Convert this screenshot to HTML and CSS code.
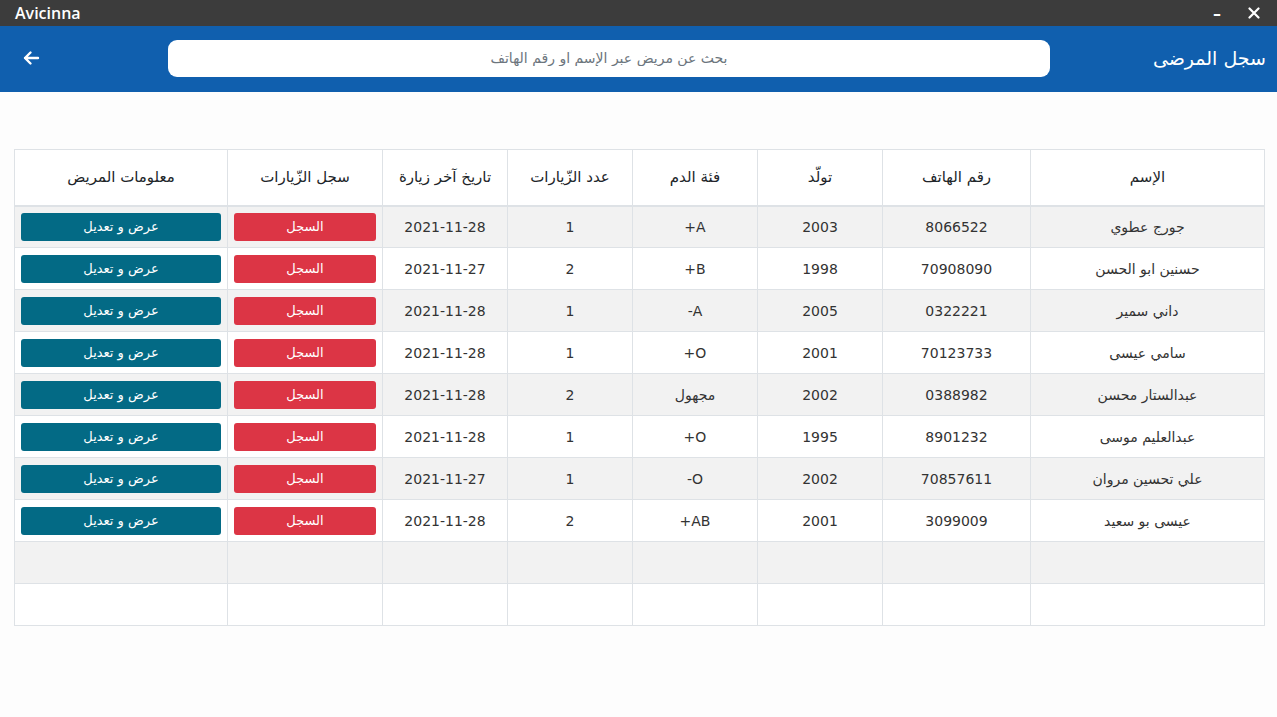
FILE: index.html
```html
<!DOCTYPE html>
<html lang="ar">
<head>
<meta charset="utf-8">
<title>Avicinna</title>
<link rel="stylesheet" href="styles.css">
</head>
<body>
<div class="titlebar">
  <span class="app-name">Avicinna</span>
  <div class="win-controls">
    <span class="win-btn">&#8211;</span>
    <span class="win-btn close">
      <svg width="12" height="12" viewBox="0 0 12 12"><path d="M1.5 1.5 L10.5 10.5 M10.5 1.5 L1.5 10.5" stroke="#fff" stroke-width="2.2" stroke-linecap="round"/></svg>
    </span>
  </div>
</div>
<header class="appbar">
  <button class="back-btn" aria-label="back">
    <svg width="18" height="16" viewBox="0 0 18 16"><path d="M16 8 H3 M8.5 2.5 L3 8 L8.5 13.5" fill="none" stroke="#fff" stroke-width="2.4" stroke-linecap="round" stroke-linejoin="round"/></svg>
  </button>
  <input class="search" type="text" placeholder="بحث عن مريض عبر الإسم او رقم الهاتف">
  <h1 class="page-title">سجل المرضى</h1>
</header>
<main class="content">
  <table class="patients">
    <colgroup>
      <col class="c-name"><col class="c-phone"><col class="c-std"><col class="c-std"><col class="c-std"><col class="c-std"><col class="c-log"><col class="c-info">
    </colgroup>
    <thead>
      <tr>
        <th>الإسم</th><th>رقم الهاتف</th><th>تولّد</th><th>فئة الدم</th><th>عدد الزّيارات</th><th>تاريخ آخر زيارة</th><th>سجل الزّيارات</th><th>معلومات المريض</th>
      </tr>
    </thead>
    <tbody>
      <tr><td>جورج عطوي</td><td>8066522</td><td>2003</td><td>A+</td><td>1</td><td>2021-11-28</td><td><button class="btn btn-red">السجل</button></td><td><button class="btn btn-teal">عرض و تعديل</button></td></tr>
      <tr><td>حسنين ابو الحسن</td><td>70908090</td><td>1998</td><td>B+</td><td>2</td><td>2021-11-27</td><td><button class="btn btn-red">السجل</button></td><td><button class="btn btn-teal">عرض و تعديل</button></td></tr>
      <tr><td>داني سمير</td><td>0322221</td><td>2005</td><td>A-</td><td>1</td><td>2021-11-28</td><td><button class="btn btn-red">السجل</button></td><td><button class="btn btn-teal">عرض و تعديل</button></td></tr>
      <tr><td>سامي عيسى</td><td>70123733</td><td>2001</td><td>O+</td><td>1</td><td>2021-11-28</td><td><button class="btn btn-red">السجل</button></td><td><button class="btn btn-teal">عرض و تعديل</button></td></tr>
      <tr><td>عبدالستار محسن</td><td>0388982</td><td>2002</td><td>مجهول</td><td>2</td><td>2021-11-28</td><td><button class="btn btn-red">السجل</button></td><td><button class="btn btn-teal">عرض و تعديل</button></td></tr>
      <tr><td>عبدالعليم موسى</td><td>8901232</td><td>1995</td><td>O+</td><td>1</td><td>2021-11-28</td><td><button class="btn btn-red">السجل</button></td><td><button class="btn btn-teal">عرض و تعديل</button></td></tr>
      <tr><td>علي تحسين مروان</td><td>70857611</td><td>2002</td><td>O-</td><td>1</td><td>2021-11-27</td><td><button class="btn btn-red">السجل</button></td><td><button class="btn btn-teal">عرض و تعديل</button></td></tr>
      <tr><td>عيسى بو سعيد</td><td>3099009</td><td>2001</td><td>AB+</td><td>2</td><td>2021-11-28</td><td><button class="btn btn-red">السجل</button></td><td><button class="btn btn-teal">عرض و تعديل</button></td></tr>
      <tr class="empty"><td></td><td></td><td></td><td></td><td></td><td></td><td></td><td></td></tr>
      <tr class="empty"><td></td><td></td><td></td><td></td><td></td><td></td><td></td><td></td></tr>
    </tbody>
  </table>
</main>
</body>
</html>
```
FILE: styles.css
```css
* { box-sizing: border-box; }
html, body {
  margin: 0;
  padding: 0;
  background: #fdfdfd;
  font-family: "DejaVu Sans", "Noto Sans", sans-serif;
  color: #212529;
}
.titlebar {
  height: 26px;
  background: #3c3c3c;
  color: #fff;
  display: flex;
  align-items: center;
  justify-content: space-between;
  padding: 0 0 0 15px;
}
.app-name {
  font-family: "Open Sans", "DejaVu Sans", sans-serif;
  font-size: 16px;
  font-weight: 600;
}
.win-controls {
  display: flex;
  align-items: center;
  height: 100%;
}
.win-btn {
  width: 36px;
  height: 26px;
  display: flex;
  align-items: center;
  justify-content: center;
  font-size: 16px;
  font-weight: bold;
}
.win-btn.close { width: 38px; margin-right: 4px; }
.appbar {
  height: 66px;
  background: #105fae;
  display: flex;
  align-items: center;
  padding: 0 11px 0 20px;
}
.back-btn {
  background: none;
  border: none;
  padding: 0;
  width: 22px;
  height: 24px;
  margin-bottom: 3px;
  display: flex;
  align-items: center;
  justify-content: center;
  cursor: pointer;
}
.search {
  margin-left: 126px;
  margin-bottom: 2px;
  width: 882px;
  height: 37px;
  border: none;
  border-radius: 9px;
  background: #fff;
  text-align: center;
  direction: rtl;
  font-family: inherit;
  font-size: 14px;
  outline: none;
}
.search::placeholder { color: #6c757d; }
.page-title {
  flex: 1;
  margin: 0 0 2px 0;
  font-size: 19px;
  font-weight: normal;
  color: #fff;
  direction: rtl;
  text-align: right;
  white-space: nowrap;
}
.content {
  padding: 57px 13px 0 14px;
}
.patients {
  direction: rtl;
  width: 1250px;
  table-layout: fixed;
  border-collapse: collapse;
  font-size: 14px;
}
.c-name { width: 234px; }
.c-phone { width: 148px; }
.c-std { width: 125px; }
.c-log { width: 155px; }
.c-info { width: 213px; }
.patients th, .patients td {
  border: 1px solid #dee2e6;
  text-align: center;
  vertical-align: middle;
  padding: 0 6px;
}
.patients th {
  height: 56px;
  font-weight: normal;
  font-size: 15px;
  border-bottom: 2px solid #dee2e6;
  background: #fff;
}
.patients td { height: 42px; color: #333; }
.patients tbody tr:nth-child(odd) td { background: #f2f2f2; }
.patients tbody tr:nth-child(even) td { background: #fff; }
.btn {
  display: block;
  width: 100%;
  height: 28px;
  border: none;
  border-radius: 3px;
  color: #fff;
  font-family: inherit;
  font-size: 13px;
  cursor: pointer;
}
.btn-red { background: #dc3545; }
.btn-teal { background: #036a85; }
```
